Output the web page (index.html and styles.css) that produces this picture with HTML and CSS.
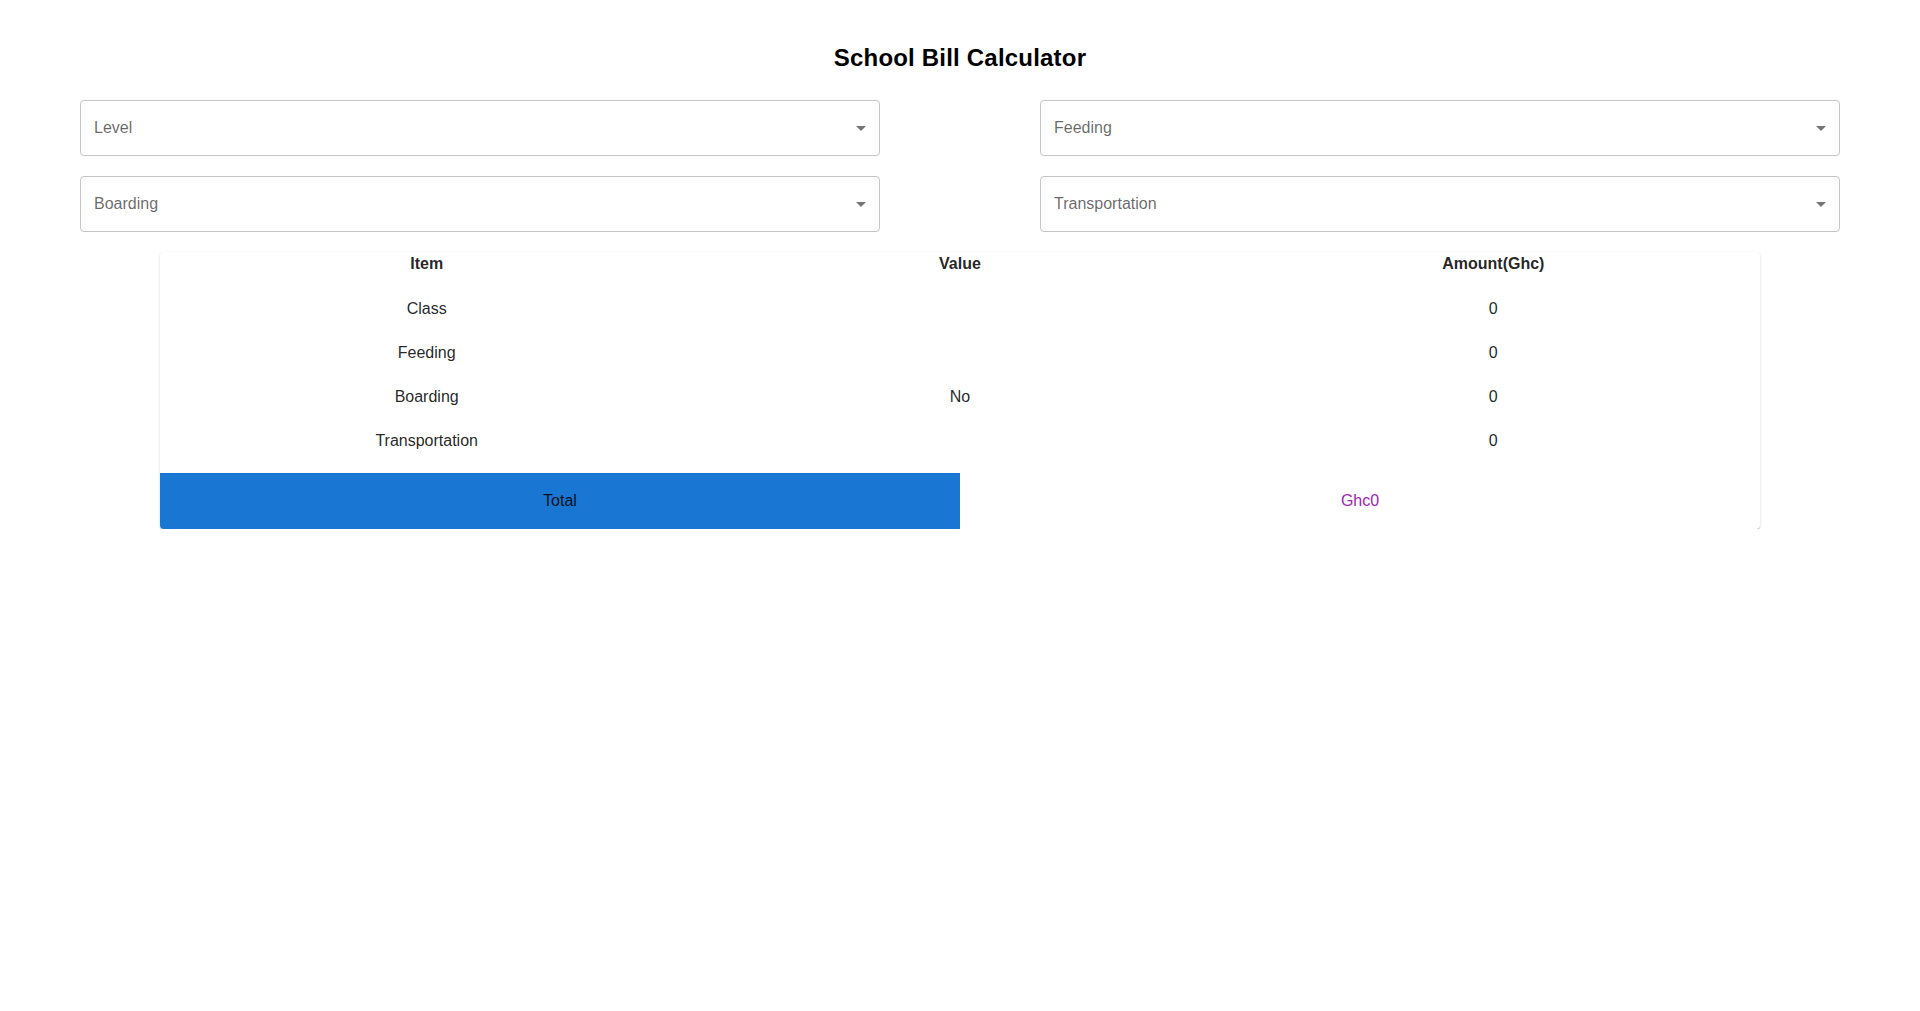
FILE: index.html
```html
<!DOCTYPE html>
<html lang="en">
<head>
<meta charset="utf-8">
<title>School Bill Calculator</title>
<link rel="stylesheet" href="styles.css">
</head>
<body>
<div class="app">
  <h1 class="title">School Bill Calculator</h1>
  <div class="selects">
    <div class="select"><span class="select-label">Level</span><svg class="arrow" viewBox="0 0 24 24"><path d="M7 10l5 5 5-5z"/></svg></div>
    <div class="select"><span class="select-label">Feeding</span><svg class="arrow" viewBox="0 0 24 24"><path d="M7 10l5 5 5-5z"/></svg></div>
    <div class="select"><span class="select-label">Boarding</span><svg class="arrow" viewBox="0 0 24 24"><path d="M7 10l5 5 5-5z"/></svg></div>
    <div class="select"><span class="select-label">Transportation</span><svg class="arrow" viewBox="0 0 24 24"><path d="M7 10l5 5 5-5z"/></svg></div>
  </div>
  <div class="card">
    <div class="table">
      <div class="row head"><div class="cell">Item</div><div class="cell">Value</div><div class="cell">Amount(Ghc)</div></div>
      <div class="row"><div class="cell">Class</div><div class="cell"></div><div class="cell">0</div></div>
      <div class="row"><div class="cell">Feeding</div><div class="cell"></div><div class="cell">0</div></div>
      <div class="row"><div class="cell">Boarding</div><div class="cell">No</div><div class="cell">0</div></div>
      <div class="row"><div class="cell">Transportation</div><div class="cell"></div><div class="cell">0</div></div>
    </div>
    <div class="total">
      <div class="total-label">Total</div>
      <div class="total-value">Ghc0</div>
    </div>
  </div>
</div>
</body>
</html>
```

FILE: styles.css
```css
* { box-sizing: border-box; }
html, body { margin: 0; padding: 0; background: #fff; }
body {
  font-family: "Liberation Sans", Arial, sans-serif;
  font-size: 16px;
  line-height: 24px;
  color: rgba(0, 0, 0, 0.87);
}
.app { padding: 42px 80px 0; }
.title {
  margin: 0;
  text-align: center;
  font-size: 24px;
  line-height: 32px;
  font-weight: 700;
  color: #000;
  letter-spacing: 0.2px;
}
.selects {
  margin-top: 26px;
  display: grid;
  grid-template-columns: 800px 800px;
  column-gap: 160px;
  row-gap: 20px;
}
.select {
  height: 56px;
  border: 1px solid rgba(0, 0, 0, 0.23);
  border-radius: 4px;
  display: flex;
  align-items: center;
  justify-content: space-between;
  padding: 0 6px 0 13px;
}
.select-label { color: rgba(0, 0, 0, 0.6); }
.arrow { width: 24px; height: 24px; fill: rgba(0, 0, 0, 0.54); }
.card {
  margin: 20px 80px 0;
  background: #fff;
  border-radius: 4px;
  box-shadow: 0px 2px 1px -1px rgba(0,0,0,0.25), 0px 1px 1px 0px rgba(0,0,0,0.16), 0px 1px 3px 0px rgba(0,0,0,0.12);
  overflow: hidden;
}
.row {
  display: grid;
  grid-template-columns: 1fr 1fr 1fr;
  height: 44px;
  align-items: center;
}
.row.head {
  height: 35px;
  align-items: start;
  font-weight: 700;
}
.cell { text-align: center; }
.total {
  margin-top: 10px;
  display: grid;
  grid-template-columns: 1fr 1fr;
  height: 56px;
}
.total-label {
  background: #1976d2;
  display: flex;
  align-items: center;
  justify-content: center;
  color: rgba(0, 0, 0, 0.87);
}
.total-value {
  display: flex;
  align-items: center;
  justify-content: center;
  color: #9c27b0;
}
```
